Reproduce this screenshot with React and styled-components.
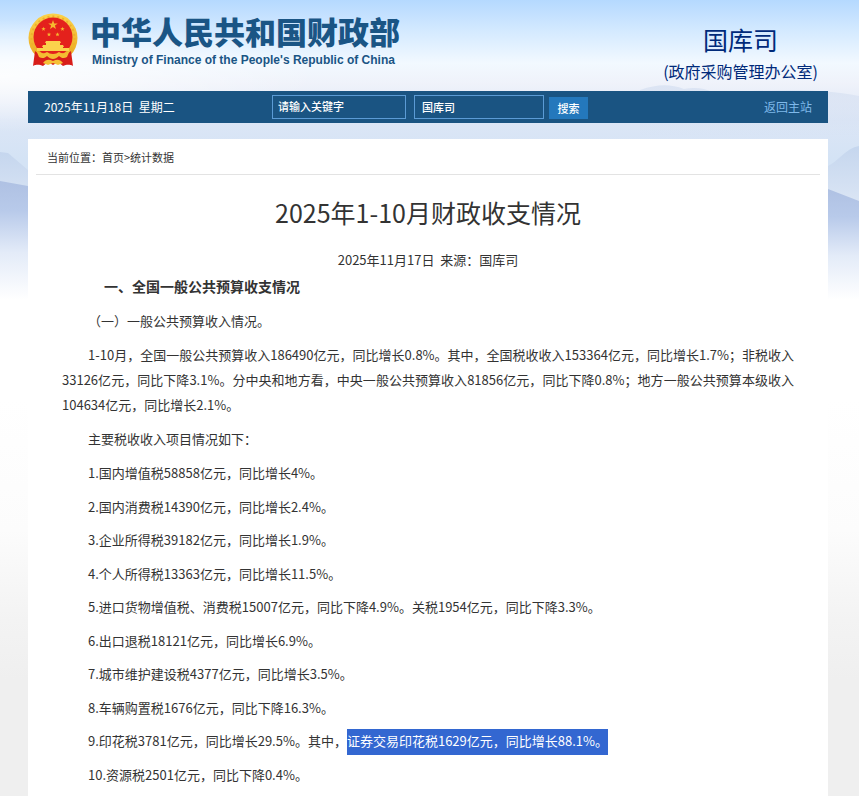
import React from "react";
import styled, { createGlobalStyle } from "styled-components";

const items = [
  { text: "1.国内增值税58858亿元，同比增长4%。" },
  { text: "2.国内消费税14390亿元，同比增长2.4%。" },
  { text: "3.企业所得税39182亿元，同比增长1.9%。" },
  { text: "4.个人所得税13363亿元，同比增长11.5%。" },
  { text: "5.进口货物增值税、消费税15007亿元，同比下降4.9%。关税1954亿元，同比下降3.3%。" },
  { text: "6.出口退税18121亿元，同比增长6.9%。" },
  { text: "7.城市维护建设税4377亿元，同比增长3.5%。" },
  { text: "8.车辆购置税1676亿元，同比下降16.3%。" },
  {
    text: "9.印花税3781亿元，同比增长29.5%。其中，",
    selected: "证券交易印花税1629亿元，同比增长88.1%。",
  },
  { text: "10.资源税2501亿元，同比下降0.4%。" },
];

const star = (cx, cy, r) =>
  Array.from({ length: 10 }, (_, i) => {
    const a = (Math.PI * i) / 5 - Math.PI / 2;
    const d = i % 2 ? r * 0.4 : r;
    return `${(cx + d * Math.cos(a)).toFixed(2)},${(cy + d * Math.sin(a)).toFixed(2)}`;
  }).join(" ");

function Emblem() {
  return (
    <svg width="50" height="54" viewBox="0 0 50 54" aria-hidden="true">
      <defs>
        <linearGradient id="gold" x1="0" y1="0" x2="0" y2="1">
          <stop offset="0" stopColor="#fbd24c" />
          <stop offset="1" stopColor="#e9a61c" />
        </linearGradient>
      </defs>
      <circle cx="25" cy="25" r="24.5" fill="url(#gold)" />
      <circle
        cx="25"
        cy="25"
        r="21.5"
        fill="none"
        stroke="#eeb02c"
        strokeWidth="2"
        strokeDasharray="2 3"
      />
      <circle cx="25" cy="24" r="19.5" fill="#e4211c" />
      <polygon points={star(25, 12, 5)} fill="#f5b92f" />
      <polygon points={star(15.5, 16, 2.3)} fill="#f5b92f" />
      <polygon points={star(34.5, 16, 2.3)} fill="#f5b92f" />
      <polygon points={star(21, 21.5, 2.3)} fill="#f5b92f" />
      <polygon points={star(29.5, 21.5, 2.3)} fill="#f5b92f" />
      <path
        d="M18 28h14l1 2h-1v2h3l1 2h-1v1h6v3H9v-3h6v-1h-1l1-2h3v-2h-1z"
        fill="#fbd24c"
      />
      <path
        d="M7 38c3 3 8 4 12 2l6 3 6-3c4 2 9 1 12-2l2 15c-4-2-7-1-10 0l-5-4-5 3-5-3-5 4c-3-1-6-2-10 0z"
        fill="#d81e1a"
      />
      <path
        d="M8 37c4 4 8 4 11 2 2 1 3 2 6 2s4-1 6-2c3 2 7 2 11-2l-3 7c-3 2-6 1-8-1-2 2-4 3-6 3s-4-1-6-3c-2 2-5 3-8 1z"
        fill="#f4bd32"
      />
      <path d="M15 50c3-4 6-4 10-2 4-2 7-2 10 2l-5 2-5-2-5 2z" fill="#f5c037" />
    </svg>
  );
}

function Scenery() {
  return (
    <Backdrop viewBox="0 0 859 300" preserveAspectRatio="none" aria-hidden="true">
      <defs>
        <linearGradient id="sky" x1="0" y1="0" x2="0" y2="1">
          <stop offset="0" stopColor="#b5d9ff" />
          <stop offset="0.1" stopColor="#d3e9ff" />
          <stop offset="0.21" stopColor="#f2f9ff" />
          <stop offset="0.28" stopColor="#eff2fa" />
          <stop offset="0.4" stopColor="#dce6f6" />
          <stop offset="0.53" stopColor="#d4e3f5" />
          <stop offset="0.7" stopColor="#d4e3f5" />
          <stop offset="0.95" stopColor="#ffffff" />
        </linearGradient>
        <linearGradient id="far" x1="0" y1="0" x2="0" y2="1">
          <stop offset="0" stopColor="#c5d6ee" />
          <stop offset="1" stopColor="#ffffff" />
        </linearGradient>
        <linearGradient id="near" x1="0" y1="0" x2="0" y2="1">
          <stop offset="0" stopColor="#afc1e3" />
          <stop offset="0.25" stopColor="#b8caea" />
          <stop offset="0.6" stopColor="#e3ebf8" />
          <stop offset="1" stopColor="#ffffff" />
        </linearGradient>
        <linearGradient id="ridge" x1="0" y1="0" x2="0" y2="1">
          <stop offset="0" stopColor="#cfdbef" stopOpacity="0.6" />
          <stop offset="1" stopColor="#cfdbef" stopOpacity="0" />
        </linearGradient>
        <radialGradient id="haze">
          <stop offset="0" stopColor="#ffffff" stopOpacity="0.8" />
          <stop offset="1" stopColor="#ffffff" stopOpacity="0" />
        </radialGradient>
      </defs>
      <rect width="859" height="300" fill="url(#sky)" />
      <ellipse cx="0" cy="76" rx="320" ry="56" fill="url(#haze)" />
      <path d="M640 90c18-6 30-6 44-1 12-2 20-1 28 3 40 0 100-6 147 4v40H640z" fill="url(#ridge)" />
      <path d="M0 152l8 1 20 17v130H0z" fill="url(#far)" />
      <path d="M0 181l28 5v114H0z" fill="url(#near)" />
      <path d="M828 166c8-3 18-18 31-20v154h-31z" fill="url(#far)" />
      <path d="M828 189l31 12v99h-31z" fill="url(#near)" />
    </Backdrop>
  );
}

export default function App() {
  return (
    <>
      <GlobalStyle />
      <Page>
        <Scenery />
        <Container>
          <Header>
            <Brand href="#">
              <Emblem />
              <BrandText>
                <BrandName>中华人民共和国财政部</BrandName>
                <BrandEnglish>Ministry of Finance of the People's Republic of China</BrandEnglish>
              </BrandText>
            </Brand>
            <Department>
              <DepartmentName>国库司</DepartmentName>
              <DepartmentNote>(政府采购管理办公室)</DepartmentNote>
            </Department>
          </Header>
          <Toolbar>
            <Today>2025年11月18日&nbsp; 星期二</Today>
            <SearchForm onSubmit={(e) => e.preventDefault()}>
              <Keyword type="text" aria-label="关键字" defaultValue="请输入关键字" />
              <Scope aria-label="搜索范围" defaultValue="gks">
                <option value="gks">国库司</option>
              </Scope>
              <SearchButton type="submit">搜索</SearchButton>
            </SearchForm>
            <BackLink href="#">返回主站</BackLink>
          </Toolbar>
          <Main>
            <Breadcrumb>
              当前位置：<a href="#">首页</a>&gt;<a href="#">统计数据</a>
            </Breadcrumb>
            <Article>
              <Title>2025年1-10月财政收支情况</Title>
              <Meta>2025年11月17日&nbsp; 来源：国库司</Meta>
              <SectionTitle>一、全国一般公共预算收支情况</SectionTitle>
              <Paragraph>（一）一般公共预算收入情况。</Paragraph>
              <Paragraph>
                1-10月，全国一般公共预算收入186490亿元，同比增长0.8%。其中，全国税收收入153364亿元，同比增长1.7%；非税收入33126亿元，同比下降3.1%。分中央和地方看，中央一般公共预算收入81856亿元，同比下降0.8%；地方一般公共预算本级收入104634亿元，同比增长2.1%。
              </Paragraph>
              <Paragraph>主要税收收入项目情况如下：</Paragraph>
              <TaxItems>
                {items.map(({ text, selected }) => (
                  <TaxItem key={text}>
                    {text}
                    {selected && <Selected>{selected}</Selected>}
                  </TaxItem>
                ))}
              </TaxItems>
            </Article>
          </Main>
        </Container>
      </Page>
    </>
  );
}

const GlobalStyle = createGlobalStyle`
  * {
    box-sizing: border-box;
  }

  body {
    margin: 0;
    color: #333;
    background: #efefef;
    font-family: "Noto Sans CJK SC", sans-serif;
    font-size: 12px;
  }

  a {
    color: inherit;
    text-decoration: none;
  }

  input,
  select,
  button {
    font: inherit;
  }
`;

const Page = styled.div`
  position: relative;
  min-height: 100vh;
  background: linear-gradient(#fff 400px, #fcfcfc 530px, #f3f3f3 620px, #efefef 680px);
`;

const Backdrop = styled.svg`
  position: absolute;
  top: 0;
  left: 0;
  width: 100%;
  height: 300px;
`;

const Container = styled.div`
  position: relative;
  padding: 0 31px 0 28px;
`;

const Header = styled.header`
  display: flex;
  justify-content: space-between;
  height: 91px;
`;

const Brand = styled.a`
  display: flex;
  gap: 12px;
  padding-top: 10px;
  color: #1a5585;

  svg {
    margin-top: 3px;
  }
`;

const BrandText = styled.div`
  display: flex;
  flex-direction: column;
`;

const BrandName = styled.span`
  font-size: 31px;
  font-weight: 900;
  line-height: 42px;
`;

const BrandEnglish = styled.span`
  padding-left: 2px;
  font-family: "Liberation Sans", sans-serif;
  font-size: 12px;
  font-weight: 700;
  line-height: 16px;
`;

const Department = styled.div`
  padding: 21px 10px 0 0;
  color: #002a7a;
  text-align: center;
`;

const DepartmentName = styled.div`
  font-size: 25px;
  line-height: 36px;
`;

const DepartmentNote = styled.div`
  font-size: 16px;
  line-height: 28px;
`;

const Toolbar = styled.div`
  display: flex;
  align-items: center;
  height: 32px;
  padding: 0 16px;
  color: #fff;
  background: #1a5482;
`;

const Today = styled.span`
  width: 228px;
  line-height: 18px;
`;

const SearchForm = styled.form`
  display: flex;
  flex: 1;
  align-items: center;
  font-size: 11px;
  font-weight: 500;
`;

const Keyword = styled.input`
  width: 134px;
  height: 24px;
  padding: 0 5px 2px;
  color: #fff;
  background: transparent;
  border: 1px solid #5b9bd5;
  border-radius: 0;
`;

const Scope = styled.select`
  width: 130px;
  height: 24px;
  margin: 0 5px 0 8px;
  padding: 0 7px;
  color: #fff;
  background: transparent;
  border: 1px solid #5b9bd5;
  border-radius: 0;
  appearance: none;
`;

const SearchButton = styled.button`
  width: 39px;
  height: 22px;
  margin-top: 2px;
  padding: 0;
  color: #fff;
  background: #2478bc;
  border: none;
`;

const BackLink = styled.a`
  color: #7fb9ea;
  line-height: 18px;
`;

const Main = styled.main`
  min-height: calc(100vh - 139px);
  margin-top: 16px;
  padding: 0 8px;
  background: #fff;
`;

const Breadcrumb = styled.nav`
  height: 36px;
  padding-left: 11px;
  font-size: 11px;
  line-height: 36px;
  border-bottom: 1px solid #e3e3e3;
`;

const Article = styled.article`
  padding: 17px 26px 0;
  font-size: 13px;
  line-height: 25px;
`;

const Title = styled.h1`
  margin: 0;
  font-size: 25px;
  font-weight: 400;
  line-height: 40px;
  text-align: center;
`;

const Meta = styled.div`
  margin: 15px 0 2px;
  text-align: center;
`;

const SectionTitle = styled.h2`
  margin: 0 0 9px;
  font-size: 14px;
  font-weight: 700;
  line-height: 25px;
  text-indent: 3em;
`;

const Paragraph = styled.p`
  margin: 0 0 9px;
  text-align: justify;
  text-indent: 2em;
`;

const TaxItems = styled.ul`
  margin: 0;
  padding: 0;
  list-style: none;
`;

const TaxItem = styled.li`
  margin-bottom: 9px;
  text-indent: 2em;

  &:nth-child(even) {
    margin-bottom: 8px;
  }
`;

const Selected = styled.mark`
  padding: 2px 0 5px;
  color: #fff;
  background: #3367d1;
`;
